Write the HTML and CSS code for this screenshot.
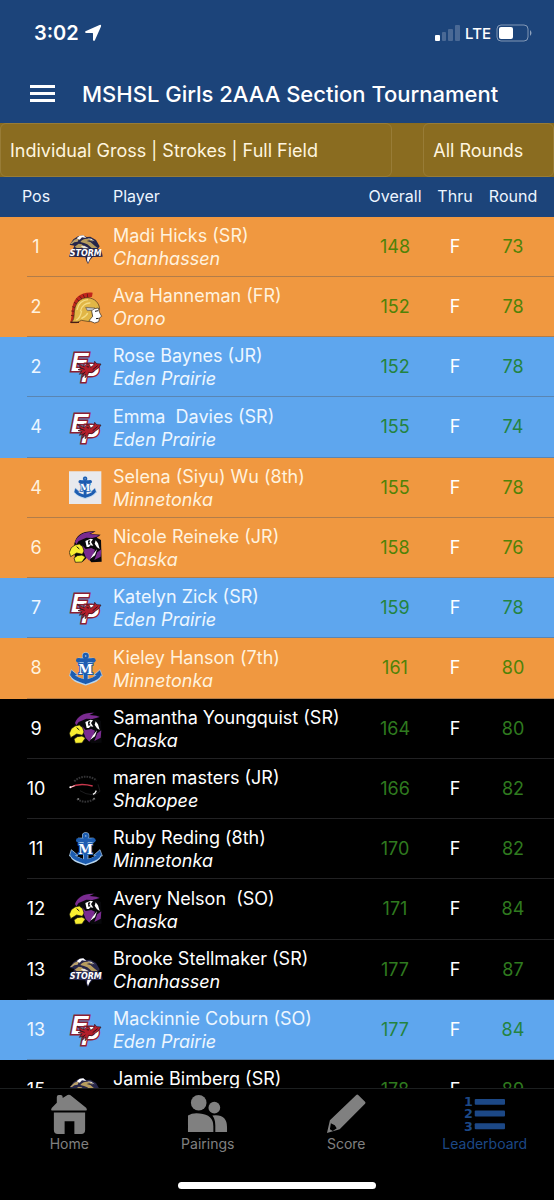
FILE: index.html
```html
<!DOCTYPE html>
<html lang="en">
<head>
<meta charset="utf-8">
<meta name="viewport" content="width=device-width, initial-scale=1">
<title>MSHSL Girls 2AAA Section Tournament</title>
<link rel="stylesheet" href="styles.css">
</head>
<body>
<svg class="sprite" aria-hidden="true">
  <symbol id="storm" viewBox="27 15 102 102">
    <path d="M29 59 40 43 54 34 68 31 80 36 91 35 108 45 119 64 112 74 38 75 43 62Z" fill="#26264a"/>
    <path d="M30 57 43 44 58 38 53 50 43 52 36 57Z" fill="#b9a06a"/>
    <path d="M50 40 59 32 70 31 79 39 66 37 59 44Z" fill="#fff"/>
    <path d="M61 51C70 38 90 38 99 50L88 46 80 48 91 51 104 62 113 69H95L82 58 72 54Z" fill="#b69c5e"/>
    <path d="M44 65 56 56 65 58 78 69H50Z" fill="#b69c5e"/>
    <path d="M62 63 73 62 87 70H70ZM81 40l13 1 10 8-9-3z" fill="#e9e4d6"/>
    <path d="M40 73H124L128 95 98 96 90 105 84 117 79 108 76 97 27 95 33 77Z" fill="#26264a"/>
    <path d="M82 95H94L88 104 84 114 81 105Z" fill="#fff"/>
    <text x="29" y="93" class="storm-word">STORM</text>
  </symbol>
  <symbol id="orono" viewBox="27 15 102 102">
    <path d="M31 111C37 94 34 76 38 62 44 38 62 20 98 23L96 35 83 39C62 38 48 55 49 78 50 95 48 106 43 112Z" fill="#c0251c"/>
    <path d="M33 91 43 93M34 78 46 79M37 65 49 69M42 52 53 58M49 41 59 50M58 33 66 42M69 28 74 39M82 26 83 38" stroke="#6a1c17" stroke-width="3"/>
    <path d="M33 113C45 103 41 89 44 75 47 52 62 38 83 38 105 40 118 54 119 73L97 78 98 100 88 110 64 106 51 113Z" fill="#e1b646" stroke="#493419" stroke-width="2"/>
    <path d="M51 75C54 56 68 45 84 44M61 79C65 60 79 53 91 54M49 105C62 98 62 87 65 77M64 101C73 96 80 93 83 84" fill="none" stroke="#f5db83" stroke-width="4"/>
    <path d="M94 73 115 69 119 83 125 94 119 98 116 110 104 114 87 107 98 94Z" fill="#fff" stroke="#282018" stroke-width="2"/>
    <path d="M77 67 105 69 97 76 82 77Z" fill="#c3c5c8" stroke="#635442" stroke-width="2"/>
    <path d="m105 79 10-2M108 101l8-1" stroke="#111" stroke-width="3"/>
    <path d="M31 112H57" stroke="#461c16" stroke-width="4"/>
  </symbol>
  <symbol id="eden" viewBox="27 15 102 102">
    <text x="33" y="78" class="eden-letter">E</text>
    <text x="64" y="112" class="eden-letter">P</text>
    <path d="M51 54 64 61 73 65 80 56 88 58 92 67 101 60 104 49 110 56 123 57 115 69 105 76 95 83 86 82 83 91 75 98 77 87 67 97 71 84 58 88 66 77 54 74 64 70Z" fill="#b41f2b" stroke="#28131b" stroke-width="2"/>
    <path d="M59 68 74 73M98 74 113 62M76 80 68 89M80 65l7 1" stroke="#35131c" stroke-width="3"/>
  </symbol>
  <symbol id="anchor" viewBox="27 21 102 102">
    <g fill="none" stroke="#b9d6ee" stroke-width="16">
      <circle cx="77" cy="33" r="6" stroke-width="10"/>
      <path d="M54 46H101M77 43V108M37 89C42 105 62 107 77 113 92 107 112 105 118 89"/>
    </g>
    <path d="M28 93 34 74 54 91ZM127 93 120 74 101 91Z" fill="#1c5cb0" stroke="#b9d6ee" stroke-width="2"/>
    <g fill="none" stroke="#1c5cb0" stroke-width="12">
      <circle cx="77" cy="33" r="6" stroke-width="7"/>
      <path d="M55 46H100M77 43V108M37 89C43 103 62 104 77 111 92 104 111 103 117 89"/>
    </g>
    <circle cx="55" cy="46" r="7" fill="#1c5cb0"/><circle cx="100" cy="46" r="7" fill="#1c5cb0"/>
    <text x="77" y="86" class="anchor-m">M</text>
  </symbol>
  <symbol id="anchor-card" viewBox="0 0 102 102">
    <path d="M0 1H97V99H0Z" fill="#e8e9ed"/>
    <use href="#anchor" x="14" y="15" width="70" height="70"/>
  </symbol>
  <symbol id="hawk" viewBox="27 198 102 102">
    <path d="M43 236C48 210 69 196 107 199L92 207 122 209 110 218 123 225 125 290 94 292 82 277 68 290 45 291Z" fill="#08080b"/>
    <path d="M45 231C52 210 71 199 102 200L88 207 109 209 119 213 97 219 79 218 56 228 49 238Z" fill="#7a2b90"/>
    <path d="M67 241 77 252 94 249 105 254 99 269 88 287 77 276 70 258Z" fill="#7a2b90"/>
    <path d="M76 228 92 221 99 223 93 231 100 242 91 241 87 246 80 246Z" fill="#fff"/>
    <path d="M84 227 91 225 88 233 92 238 85 239Z" fill="#050505"/>
    <path d="M107 226 114 235 119 252 111 247 104 236ZM99 268 111 253 105 271 91 281Z" fill="#fff"/>
    <path d="M28 262 34 248 45 240 58 237 68 245 72 258 67 268 50 264 32 275Z" fill="#f8ee31" stroke="#111" stroke-width="2"/>
    <path d="M42 279 52 272 66 270 76 276 66 291 46 292Z" fill="#f8ee31" stroke="#111" stroke-width="2"/>
    <path d="M50 245l8 7" fill="none" stroke="#111" stroke-width="3"/>
    <path d="M112 262 124 253 122 275 103 285Z" fill="#7a2b90"/>
  </symbol>
  <symbol id="shakopee" viewBox="27 24 102 102">
    <path d="M43 52C61 34 89 34 110 49M51 105C66 116 88 116 105 103" fill="none" stroke="#333335" stroke-width="6" stroke-dasharray="5 3"/>
    <path d="M114 61 120 82 103 93 78 89 60 80" fill="none" stroke="#1c1c1e" stroke-width="3"/>
    <path d="M31 70C49 60 71 59 98 66" fill="none" stroke="#c9374c" stroke-width="4"/>
    <path d="M31 70 44 65" stroke="#f3cace" stroke-width="3"/>
    <circle cx="31" cy="70" r="3" fill="#fff"/>
    <path d="m99 91 6-4 4-7" fill="none" stroke="#f0f0f0" stroke-width="4"/>
    <circle cx="55" cy="105" r="3" fill="#777"/><circle cx="102" cy="104" r="3" fill="#777"/>
  </symbol>
</svg>

<div class="app">
  <header class="header">
    <div class="status">
      <div class="status-group">
        <span class="time">3:02</span>
        <svg class="location" viewBox="0 0 18 18" aria-label="Location"><path d="M15.500 1Q17.600 0 17 2.500L11 16Q10 18 9 16V9.500Q9 9 8.500 9H2Q0 8 2 7Z"/></svg>
      </div>
      <div class="status-group">
        <svg class="signal" viewBox="0 0 26 16" aria-label="Signal"><rect x="1" y="10" width="5" height="6" rx="1"/><g opacity=".2"><rect x="8" y="7" width="4" height="9" rx="1"/><rect x="14" y="4" width="5" height="12" rx="1"/><rect x="21" y="0" width="5" height="16" rx="1"/></g></svg>
        <span class="network">LTE</span>
        <svg class="battery" viewBox="0 0 36 18" aria-label="Battery"><rect x="1" y="1" width="31" height="16" rx="4" fill="none" stroke="#fff" stroke-opacity=".45"/><rect x="3" y="3" width="14" height="12" rx="2"/><path d="M34 6Q37 9 34 12Z" opacity=".5"/></svg>
      </div>
    </div>
    <div class="titlebar">
      <button class="menu" type="button" aria-label="Menu"><svg viewBox="0 0 25 17"><path d="M0 1.500H25M0 8.500H25M0 15.500H25"/></svg></button>
      <h1>MSHSL Girls 2AAA Section Tournament</h1>
    </div>
  </header>

  <form class="filters">
    <select class="filter" aria-label="Leaderboard"><option>Individual Gross | Strokes | Full Field</option></select>
    <select class="filter" aria-label="Round"><option>All Rounds</option></select>
  </form>

  <main class="board">
    <table>
      <colgroup><col class="col-pos"><col class="col-logo"><col><col class="col-score"><col class="col-score"><col class="col-round"></colgroup>
      <thead><tr><th scope="col" class="pos">Pos</th><th></th><th scope="col" class="player">Player</th><th scope="col">Overall</th><th scope="col">Thru</th><th scope="col" class="round">Round</th></tr></thead>
      <tbody>
        <tr class="orange"><td class="pos">1</td><td class="logo"><svg><use href="#storm"/></svg></td><td class="player">Madi Hicks (SR)<em>Chanhassen</em></td><td class="score">148</td><td class="thru">F</td><td class="score round">73</td></tr>
        <tr class="orange"><td class="pos">2</td><td class="logo"><svg><use href="#orono"/></svg></td><td class="player">Ava Hanneman (FR)<em>Orono</em></td><td class="score">152</td><td class="thru">F</td><td class="score round">78</td></tr>
        <tr class="blue"><td class="pos">2</td><td class="logo"><svg><use href="#eden"/></svg></td><td class="player">Rose Baynes (JR)<em>Eden Prairie</em></td><td class="score">152</td><td class="thru">F</td><td class="score round">78</td></tr>
        <tr class="blue"><td class="pos">4</td><td class="logo"><svg><use href="#eden"/></svg></td><td class="player">Emma&nbsp; Davies (SR)<em>Eden Prairie</em></td><td class="score">155</td><td class="thru">F</td><td class="score round">74</td></tr>
        <tr class="orange"><td class="pos">4</td><td class="logo"><svg><use href="#anchor-card"/></svg></td><td class="player">Selena (Siyu) Wu (8th)<em>Minnetonka</em></td><td class="score">155</td><td class="thru">F</td><td class="score round">78</td></tr>
        <tr class="orange"><td class="pos">6</td><td class="logo"><svg><use href="#hawk"/></svg></td><td class="player">Nicole Reineke (JR)<em>Chaska</em></td><td class="score">158</td><td class="thru">F</td><td class="score round">76</td></tr>
        <tr class="blue"><td class="pos">7</td><td class="logo"><svg><use href="#eden"/></svg></td><td class="player">Katelyn Zick (SR)<em>Eden Prairie</em></td><td class="score">159</td><td class="thru">F</td><td class="score round">78</td></tr>
        <tr class="orange"><td class="pos">8</td><td class="logo"><svg><use href="#anchor"/></svg></td><td class="player">Kieley Hanson (7th)<em>Minnetonka</em></td><td class="score">161</td><td class="thru">F</td><td class="score round">80</td></tr>
        <tr><td class="pos">9</td><td class="logo"><svg><use href="#hawk"/></svg></td><td class="player">Samantha Youngquist (SR)<em>Chaska</em></td><td class="score">164</td><td class="thru">F</td><td class="score round">80</td></tr>
        <tr><td class="pos">10</td><td class="logo"><svg><use href="#shakopee"/></svg></td><td class="player">maren masters (JR)<em>Shakopee</em></td><td class="score">166</td><td class="thru">F</td><td class="score round">82</td></tr>
        <tr><td class="pos">11</td><td class="logo"><svg><use href="#anchor"/></svg></td><td class="player">Ruby Reding (8th)<em>Minnetonka</em></td><td class="score">170</td><td class="thru">F</td><td class="score round">82</td></tr>
        <tr><td class="pos">12</td><td class="logo"><svg><use href="#hawk"/></svg></td><td class="player">Avery Nelson&nbsp; (SO)<em>Chaska</em></td><td class="score">171</td><td class="thru">F</td><td class="score round">84</td></tr>
        <tr><td class="pos">13</td><td class="logo"><svg><use href="#storm"/></svg></td><td class="player">Brooke Stellmaker (SR)<em>Chanhassen</em></td><td class="score">177</td><td class="thru">F</td><td class="score round">87</td></tr>
        <tr class="blue"><td class="pos">13</td><td class="logo"><svg><use href="#eden"/></svg></td><td class="player">Mackinnie Coburn (SO)<em>Eden Prairie</em></td><td class="score">177</td><td class="thru">F</td><td class="score round">84</td></tr>
        <tr><td class="pos">15</td><td class="logo"><svg><use href="#storm"/></svg></td><td class="player">Jamie Bimberg (SR)<em>Chanhassen</em></td><td class="score">178</td><td class="thru">F</td><td class="score round">89</td></tr>
      </tbody>
    </table>
  </main>

  <nav class="tabs">
    <div class="tab-list">
      <a class="tab" href="#home"><svg viewBox="0 0 42 42"><path d="M8 3Q8 1 10 1H12Q14 1 14 3V4L19 1Q21 0 23 2L38 14Q40 17 37 17H4Q1 17 3 14L8 9ZM5 19H37V37Q37 41 33 41H26V28H16V41H9Q5 41 5 37Z"/></svg>Home</a>
      <a class="tab" href="#pairings"><svg viewBox="0 0 42 42"><circle cx="12" cy="9" r="8"/><circle cx="28" cy="14" r="6"/><path d="M1 39V22Q6 19 13 20 27 21 27 33V39ZM26 22Q41 20 41 34V39H29V32Q29 26 26 22Z"/></svg>Pairings</a>
      <a class="tab" href="#score"><svg viewBox="0 0 42 42"><path fill-rule="evenodd" d="M33 1 40 8Q41 9 40 10L14 36 1 40 4 27 31 1Q32 0 33 1ZM5 30 4 36 7 38 11 35 9 32Z"/></svg>Score</a>
      <a class="tab active" href="#leaderboard" aria-current="page"><svg viewBox="0 0 42 42"><rect x="11" y="5" width="31" height="6" rx="1"/><rect x="11" y="17" width="31" height="6" rx="1"/><rect x="11" y="30" width="31" height="6" rx="1"/><text x="0" y="12">1</text><text x="0" y="25">2</text><text x="0" y="38">3</text></svg>Leaderboard</a>
    </div>
    <div class="home-indicator"></div>
  </nav>
</div>
</body>
</html>
```
FILE: styles.css
```css
* { box-sizing: border-box; }

body {
  margin: 0;
  background: #000;
  color: #fff;
  font-family: Inter, "Liberation Sans", sans-serif;
}

.sprite { position: absolute; width: 0; height: 0; }

.app {
  display: flex;
  flex-direction: column;
  height: 100vh;
}

.header { background: #1c447a; }

.status {
  display: flex;
  align-items: center;
  justify-content: space-between;
  height: 66px;
  padding: 0 22px 0 34px;
}

.status-group {
  display: flex;
  align-items: center;
  gap: 5px;
}

.status svg { fill: #fff; }
.time { font-size: 20px; font-weight: 600; }
.location { width: 18px; height: 18px; }
.signal { width: 26px; height: 16px; }
.network { font-size: 15px; font-weight: 500; }
.battery { width: 36px; height: 18px; }

.titlebar {
  display: flex;
  align-items: center;
  gap: 27px;
  height: 57px;
  padding: 0 30px 2px;
}

.menu {
  display: flex;
  padding: 0;
  border: 0;
  background: none;
}

.menu svg {
  width: 25px;
  height: 17px;
  stroke: #fff;
  stroke-width: 3;
}

h1 {
  margin: 0;
  font-size: 22px;
  font-weight: 500;
  white-space: nowrap;
}

.filters {
  display: grid;
  grid-template-columns: 3fr 1fr;
  column-gap: 31px;
  height: 54px;
  background: #8a6c20;
}

.filter {
  min-width: 0;
  padding: 0 9px;
  border: 1px solid #987c36;
  border-radius: 6px;
  appearance: none;
  background: #8a6c20;
  color: #fff5df;
  font: inherit;
  font-size: 18px;
}

.board {
  flex: 1;
  min-height: 0;
  overflow: hidden;
}

table {
  width: 100%;
  table-layout: fixed;
  border-collapse: collapse;
  font-size: 18px;
}

.col-pos { width: 68px; }
.col-logo { width: 44px; }
.col-score { width: 60px; }
.col-round { width: 69px; }

th, td {
  padding: 0 0 2px;
  text-align: center;
}

thead tr {
  height: 40px;
  background: #1c447a;
}

th {
  color: #edf5ff;
  font-size: 16px;
  font-weight: 400;
}

tbody tr {
  height: 60px;
  background: linear-gradient(rgba(84, 84, 88, .4), rgba(84, 84, 88, .4)) 27px 100% / 100% 1px no-repeat;
}

tbody tr:nth-child(4n) { height: 61px; }

.orange { background-color: #f09840; }
.blue { background-color: #5ea6ee; }
.orange .pos, .orange .player { color: #fff2de; }
.blue .pos, .blue .player { color: #edf6ff; }

.pos { padding-left: 4px; }
.round { padding-right: 13px; }

.player {
  padding-left: 1px;
  line-height: 23px;
  text-align: left;
  white-space: nowrap;
}

td.player { padding-bottom: 0; }

.player em { display: block; }

.logo { padding: 0 0 0 1px; }

.logo svg {
  display: block;
  width: 34px;
  height: 34px;
}

.score { color: #2f7a1f; }
.orange .score { color: #4f8207; }
.blue .score { color: #24833f; }

.storm-word {
  fill: #fff;
  font: italic 700 24px "DejaVu Sans", sans-serif;
}

.eden-letter {
  fill: #fff;
  stroke: #8d1f33;
  stroke-width: 9px;
  paint-order: stroke;
  font: italic 700 78px "Liberation Sans", sans-serif;
}

.anchor-m {
  fill: #fff;
  stroke: #1c5cb0;
  stroke-width: 6px;
  paint-order: stroke;
  font: 700 40px "DejaVu Serif", serif;
  text-anchor: middle;
}

.tabs {
  display: flex;
  flex-direction: column;
  align-items: center;
  justify-content: space-between;
  height: 112px;
  padding: 5px 0 11px;
  border-top: 1px solid #1c1f20;
  background: #000;
}

.tab-list { display: flex; width: 100%; }

.tab {
  display: flex;
  flex: 1 1 0;
  flex-direction: column;
  align-items: center;
  color: #808080;
  font-size: 14px;
  line-height: 18px;
  text-decoration: none;
}

.tab svg {
  width: 41px;
  height: 41px;
  fill: currentColor;
}

.tab text { font: 700 13px "DejaVu Sans", sans-serif; }
.active { color: #1c4886; }

.home-indicator {
  width: 198px;
  height: 7px;
  border-radius: 4px;
  background: #fff;
}
```
